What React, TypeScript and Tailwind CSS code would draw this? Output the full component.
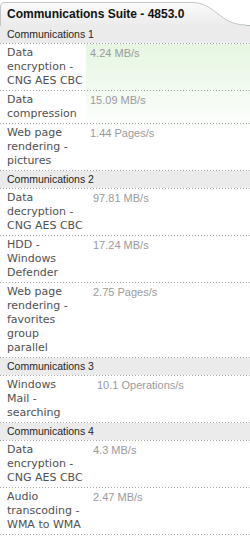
import React from "react";

type Row = { label: string[]; value: string };
type Section = { title: string; cols: string; rows: Row[]; glow?: boolean };

const sections: Section[] = [
  {
    title: "Communications 1",
    cols: "grid-cols-[86px_1fr]",
    glow: true,
    rows: [
      { label: ["Data", "encryption -", "CNG AES CBC"], value: "4.24 MB/s" },
      { label: ["Data", "compression"], value: "15.09 MB/s" },
      { label: ["Web page", "rendering -", "pictures"], value: "1.44 Pages/s" },
    ],
  },
  {
    title: "Communications 2",
    cols: "grid-cols-[89px_1fr]",
    rows: [
      { label: ["Data", "decryption -", "CNG AES CBC"], value: "97.81 MB/s" },
      { label: ["HDD -", "Windows", "Defender"], value: "17.24 MB/s" },
      {
        label: ["Web page", "rendering -", "favorites", "group", "parallel"],
        value: "2.75 Pages/s",
      },
    ],
  },
  {
    title: "Communications 3",
    cols: "grid-cols-[93px_1fr]",
    rows: [{ label: ["Windows", "Mail -", "searching"], value: "10.1 Operations/s" }],
  },
  {
    title: "Communications 4",
    cols: "grid-cols-[89px_1fr]",
    rows: [
      { label: ["Data", "encryption -", "CNG AES CBC"], value: "4.3 MB/s" },
      { label: ["Audio", "transcoding -", "WMA to WMA"], value: "2.47 MB/s" },
    ],
  },
];

function Dots() {
  return (
    <div className="h-px w-full bg-[linear-gradient(to_right,#a8a8a8_1px,transparent_1px)] bg-[length:3px_1px] bg-repeat-x" />
  );
}

export default function App() {
  return (
    <div className="w-[250px] h-[537px] overflow-hidden bg-white font-['Liberation_Sans',Arial,sans-serif]">
      {/* Title tab */}
      <div className="relative h-[26px] border-b border-[#aabaa9]">
        <svg
          className="absolute left-0 top-0"
          width="250"
          height="26"
          viewBox="0 0 250 26"
        >
          <defs>
            <linearGradient id="tabg" x1="0" y1="0" x2="0" y2="1">
              <stop offset="0" stopColor="#fbfbfb" />
              <stop offset="1" stopColor="#ebebeb" />
            </linearGradient>
          </defs>
          <path
            d="M0.5,26 V7 Q0.5,2.5 5,2.5 H192 C215,2.5 220,25 246,25 V26 Z"
            fill="url(#tabg)"
          />
          <path
            d="M0.5,26 V7 Q0.5,2.5 5,2.5 H192 C215,2.5 220,25 246,25"
            fill="none"
            stroke="#c4c4c4"
            strokeWidth="1"
          />
        </svg>
        <div className="relative pl-[7px] pt-[6px] text-[12px] leading-[16px] font-bold text-[#111]">
          Communications Suite - 4853.0
        </div>
      </div>

      {sections.map((s) => (
        <div key={s.title}>
          <div className="h-[17px] bg-[#ebebeb] pl-[7px] text-[10.5px] leading-[17px] text-[#1e1e1e]">
            {s.title}
          </div>
          <Dots />
          <div
            className={
              s.glow
                ? "bg-[linear-gradient(to_bottom,#e6f6e2_0px,#f0faee_40px,#ffffff_88px)] bg-no-repeat bg-[length:164px_90px] bg-[position:86px_0]"
                : ""
            }
          >
            {s.rows.map((r, i) => (
              <div key={i}>
                <div className={`grid ${s.cols} py-[2px]`}>
                  <div className="pl-[7px] text-[11px] leading-[14px] text-[#505050] font-['DejaVu_Sans',sans-serif]">
                    {r.label.map((l, j) => (
                      <div key={j} className="whitespace-nowrap">
                        {l}
                      </div>
                    ))}
                  </div>
                  <div className="pl-[4px] text-[11px] leading-[14px] text-[#9a9a9a] whitespace-nowrap">
                    {r.value}
                  </div>
                </div>
                <Dots />
              </div>
            ))}
          </div>
        </div>
      ))}
    </div>
  );
}
